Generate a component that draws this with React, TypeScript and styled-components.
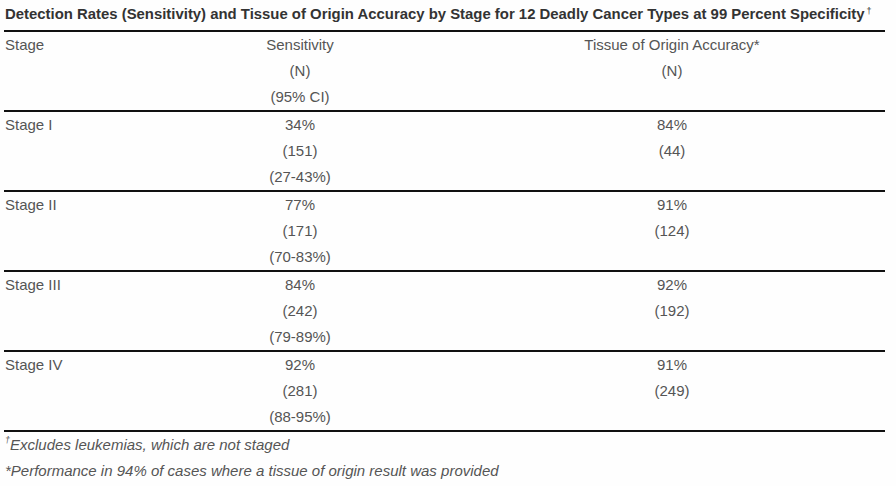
import React from "react";
import styled, { createGlobalStyle } from "styled-components";

const Global = createGlobalStyle`
  html, body { margin: 0; padding: 0; background: #fff; }
  body { font-family: "Liberation Sans", Arial, sans-serif; }
`;

const Page = styled.div`
  width: 896px;
  height: 486px;
  overflow: hidden;
  background: #fefefe;
  padding-left: 4px;
  box-sizing: border-box;
`;

const Title = styled.div`
  width: 881px;
  height: 28px;
  display: flex;
  align-items: center;
  padding-left: 1px;
  box-sizing: border-box;
  font-size: 14.9px;
  font-weight: bold;
  color: #333;
  white-space: nowrap;
  sup { font-size: 9px; font-weight: normal; position: relative; top: -3px; margin-left: 2px; }
`;

const Table = styled.div`
  width: 881px;
  margin-top: 2px;
`;

const Row = styled.div`
  display: grid;
  grid-template-columns: 137px 318px 426px;
  border-top: 2px solid #111;
`;

const Cell = styled.div<{ $align?: "left" | "center" }>`
  display: flex;
  flex-direction: column;
  align-items: ${(p) => (p.$align === "center" ? "center" : "flex-start")};
  padding-left: ${(p) => (p.$align === "center" ? "0" : "1px")};
`;

const Line = styled.div`
  height: 26px;
  line-height: 26px;
  font-size: 15px;
  color: #555;
  white-space: nowrap;
`;

const Foot = styled.div`
  border-top: 2px solid #111;
  padding-left: 1px;
`;

const Note = styled.div`
  height: 26px;
  line-height: 26px;
  font-size: 15px;
  font-style: italic;
  color: #555;
  white-space: nowrap;
  sup { font-size: 9px; line-height: 0; position: relative; top: -1px; }
`;

type RowData = { stage: string; sens: string[]; tissue: string[] };

const rows: RowData[] = [
  { stage: "Stage", sens: ["Sensitivity", "(N)", "(95% CI)"], tissue: ["Tissue of Origin Accuracy*", "(N)"] },
  { stage: "Stage I", sens: ["34%", "(151)", "(27-43%)"], tissue: ["84%", "(44)"] },
  { stage: "Stage II", sens: ["77%", "(171)", "(70-83%)"], tissue: ["91%", "(124)"] },
  { stage: "Stage III", sens: ["84%", "(242)", "(79-89%)"], tissue: ["92%", "(192)"] },
  { stage: "Stage IV", sens: ["92%", "(281)", "(88-95%)"], tissue: ["91%", "(249)"] },
];

export default function App() {
  return (
    <>
      <Global />
      <Page>
        <Title>
          Detection Rates (Sensitivity) and Tissue of Origin Accuracy by Stage for 12 Deadly Cancer Types at 99 Percent Specificity
          <sup>†</sup>
        </Title>
        <Table>
          {rows.map((r) => (
            <Row key={r.stage}>
              <Cell>
                <Line>{r.stage}</Line>
              </Cell>
              <Cell $align="center">
                {r.sens.map((s) => (
                  <Line key={s}>{s}</Line>
                ))}
              </Cell>
              <Cell $align="center">
                {r.tissue.map((s) => (
                  <Line key={s}>{s}</Line>
                ))}
              </Cell>
            </Row>
          ))}
          <Foot>
            <Note>
              <sup>†</sup>Excludes leukemias, which are not staged
            </Note>
            <Note>*Performance in 94% of cases where a tissue of origin result was provided</Note>
          </Foot>
        </Table>
      </Page>
    </>
  );
}
